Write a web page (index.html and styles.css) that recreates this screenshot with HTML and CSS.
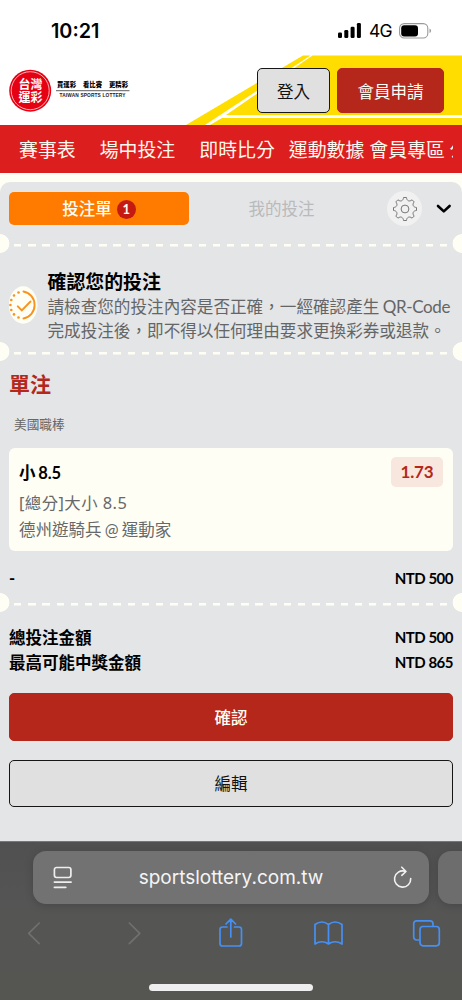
FILE: index.html
```
<!DOCTYPE html>
<html lang="zh-Hant">
<head>
<meta charset="utf-8">
<meta name="viewport" content="width=device-width">
<title>台灣運彩</title>
<link rel="stylesheet" href="styles.css">
</head>
<body>
<div class="phone">
  <div class="status">
    <span class="clock">10:21</span>
    <div class="status-right">
      <svg class="signal" width="24" height="16" viewBox="0 0 24 16"><rect x="0" y="9.5" width="4" height="5.5" rx="1.3"/><rect x="6.3" y="7" width="4" height="8" rx="1.3"/><rect x="12.6" y="3.7" width="4" height="11.3" rx="1.3"/><rect x="18.9" y="0" width="4" height="15" rx="1.3"/></svg>
      <span class="network">4G</span>
      <svg class="battery" width="33" height="16" viewBox="0 0 33 16"><rect x=".6" y=".6" width="28.2" height="14.4" rx="4.6" fill="none" stroke="#999" stroke-width="1.1"/><rect x="2.2" y="2.2" width="16.8" height="11.2" rx="3"/><path d="M30.5 5.5q1.6.7 1.6 2.3t-1.6 2.3z" fill="#999"/></svg>
    </div>
  </div>

  <header class="header">
    <svg class="stripes" width="462" height="70" viewBox="0 0 462 70" fill="#fd0"><path d="M303 .5h7.500L205 70H186z"/><path d="M312.500.5H462V60H226z"/><path d="M222 63H462v7H210z"/></svg>
    <svg class="logo" width="122" height="44" viewBox="0 0 122 44">
      <circle cx="21.200" cy="21.700" r="21" fill="#e50012"/><circle cx="21.200" cy="21.700" r="19" fill="none" stroke="#fff" stroke-width=".7"/>
      <g class="logo-mark"><text x="9.500" y="19.500" textLength="24" lengthAdjust="spacingAndGlyphs">台灣</text><text x="9.500" y="33" textLength="24" lengthAdjust="spacingAndGlyphs">運彩</text></g>
      <g class="logo-tag"><text x="48" y="18" textLength="19">買運彩</text><text x="74" y="18" textLength="19">看比賽</text><text x="100" y="18" textLength="19">更精彩</text></g>
      <path d="M47 21.700h73.500" stroke="#333" stroke-width=".8"/>
      <text class="logo-en" x="50.500" y="28.200" textLength="66">TAIWAN SPORTS LOTTERY</text>
    </svg>
    <div class="actions"><button class="btn login">登入</button><button class="btn apply">會員申請</button></div>
  </header>

  <nav class="nav"><a>賽事表</a><a>場中投注</a><a>即時比分</a><a class="near">運動數據</a><a class="tight">會員專區</a><a class="cut">公告</a></nav>

  <main class="slip">
    <div class="tabs">
      <div class="tab active">投注單<span class="count">1</span></div>
      <div class="tab idle">我的投注</div>
      <div class="gear"><svg width="26" height="26" viewBox="-13 -13 26 26" fill="none" stroke="#777" stroke-width="1"><circle r="3.900"/><path d="M-1.500 -11.500H1.500C1.720 -8.080 4.500 -6.940 7.070 -9.190L9.190 -7.070C6.940 -4.500 8.080 -1.720 11.500 -1.500V1.500C8.080 1.720 6.940 4.500 9.190 7.070L7.070 9.190C4.500 6.940 1.720 8.080 1.500 11.500H-1.500C-1.720 8.080 -4.500 6.940 -7.070 9.190L-9.190 7.070C-6.940 4.500 -8.080 1.720 -11.500 1.500V-1.500C-8.080 -1.720 -6.940 -4.500 -9.190 -7.070L-7.070 -9.190C-4.500 -6.940 -1.720 -8.080 -1.500 -11.500Z" stroke-linejoin="round"/></svg></div>
      <svg class="chevron" width="16" height="10" viewBox="0 0 16 10"><path d="M2 2l5.800 5.400L13.600 2" fill="none" stroke="#000" stroke-width="2.600" stroke-linecap="round" stroke-linejoin="round"/></svg>
    </div>
    <div class="tear"></div>
    <section class="notice">
      <svg class="check" width="29" height="38" viewBox="0 0 29 38"><ellipse cx="14.200" cy="19" rx="14.300" ry="18.800" fill="#fffef5"/><g fill="none" stroke="#f8931d" stroke-width="1.900" stroke-linecap="round"><path d="M14.500 5.500a13.400 13.700 0 0 1 0 27"/><path d="M8.800 20.300l4 4L21.500 15.500"/></g><g fill="#f8931d"><circle cx="9.500" cy="6.500" r="1.300"/><circle cx="5" cy="9.500" r="1.300"/><circle cx="2.300" cy="14" r="1.300"/><circle cx="1.400" cy="19" r="1.300"/><circle cx="2.300" cy="24" r="1.300"/><circle cx="5" cy="28.400" r="1.300"/><circle cx="9.500" cy="31.500" r="1.300"/></g></svg>
      <div class="notice-text">
        <h2>確認您的投注</h2>
        <p>請檢查您的投注內容是否正確，一經確認產生 <span class="qr">QR-Code</span></p>
        <p>完成投注後，即不得以任何理由要求更換彩券或退款。</p>
      </div>
    </section>
    <div class="tear"></div>
    <section class="bets">
      <h3>單注</h3>
      <div class="league">美國職棒</div>
      <article class="card">
        <div class="pick"><strong>小 8.5</strong><span class="market">[總分]大小 8.5</span><span class="match">德州遊騎兵 @ 運動家</span></div>
        <div class="odds">1.73</div>
      </article>
      <div class="row stake"><span>-</span><span class="money">NTD 500</span></div>
    </section>
    <div class="tear"></div>
    <section class="totals">
      <div class="row"><span>總投注金額</span><span class="money">NTD 500</span></div>
      <div class="row"><span>最高可能中獎金額</span><span class="money">NTD 865</span></div>
    </section>
    <div class="submit"><button class="btn confirm">確認</button><button class="btn edit">編輯</button></div>
  </main>

  <footer class="browser">
    <div class="address-row">
      <div class="address">
        <svg width="20" height="24" viewBox="0 0 20 24" fill="none" stroke="#eee" stroke-width="1.700" stroke-linecap="round"><rect x="1.400" y="1.500" width="16.500" height="10" rx="2.200"/><path d="M1.400 16.100h16.700M1.400 21.300h11.400"/></svg>
        <span class="url">sportslottery.com.tw</span>
        <svg width="20" height="24" viewBox="0 0 20 24" fill="none" stroke="#f2f2f2" stroke-width="1.600" stroke-linecap="round" stroke-linejoin="round"><path d="M18.700 12.500A8.100 8.100 0 1 1 13 5.300M9.800 1.200l4.200 4.300L9.800 9.300"/></svg>
      </div>
      <div class="next-tab"></div>
    </div>
    <div class="tools">
      <svg width="30" height="32" viewBox="0 0 30 32"><path d="M19.200 6L8.700 16.300L19.200 26.600"/></svg>
      <svg width="30" height="32" viewBox="0 0 30 32"><path d="M11.300 6l10.500 10.300L11.300 26.600"/></svg>
      <svg width="30" height="32" viewBox="0 0 30 32"><path d="M11 10H6.500Q4 10 4 12.500V26.500Q4 29 6.500 29H23Q25.500 29 25.500 26.500V12.500Q25.500 10 23 10H18.500M14.800 20V2.500M10 7l4.800-4.900L19.600 7"/></svg>
      <svg width="30" height="32" viewBox="0 0 30 32"><path d="M14.500 7.500Q8 2.500 1 7.500V27Q8 22.500 14.500 27Q21 22.500 28 27V7.500Q21 2.500 14.500 7.500V27"/></svg>
      <svg width="30" height="32" viewBox="0 0 30 32"><rect x="8" y="9.500" width="19.300" height="19.300" rx="3"/><path d="M7 23H4.700Q1.700 23 1.700 20V6.800Q1.700 3.800 4.700 3.800H18Q21 3.800 21 6.800V8.500"/></svg>
    </div>
    <div class="home"></div>
  </footer>
</div>
</body>
</html>
```
FILE: styles.css
```
* { box-sizing: border-box; }
body { margin: 0; background: #fffef5; }
h2, h3, p { margin: 0; }
svg { display: block; flex: none; }
.phone { width: 462px; height: 1000px; overflow: hidden; display: flex; flex-direction: column; background: #fffef5; color: #000; font-family: Lato, "Noto Sans CJK TC", sans-serif; font-size: 16.5px; white-space: nowrap; }
.phone > * { flex: none; }

.status { height: 55px; padding: 7px 30px 0 51px; display: flex; align-items: center; justify-content: space-between; background: #fff; }
.clock { font: 600 19.8px/24px Inter, sans-serif; letter-spacing: 0; }
.status-right { display: flex; align-items: center; }
.network { width: 22px; margin: 0 8px 0 7px; font: 400 17.5px/24px Inter, sans-serif; letter-spacing: -.8px; }

.header { position: relative; height: 70px; padding: 13px 18px 0 9px; display: flex; justify-content: space-between; background: #fff; }
.stripes { position: absolute; left: 0; top: 0; }
.logo { position: relative; margin-top: 1px; }
.logo-mark { fill: #fff; font: 700 12.500px "Noto Sans CJK TC", sans-serif; }
.logo-tag { font: 900 6.300px "Noto Sans CJK TC", sans-serif; }
.logo-en { fill: #222; font: 700 4.800px "Liberation Sans", sans-serif; }
.actions { position: relative; display: flex; gap: 7px; height: 45px; }
.btn { display: flex; align-items: center; justify-content: center; padding: 0; border: 1px solid #161616; border-radius: 5px; background: #e0e0e0; color: #111; font: inherit; }
.login { width: 73px; }
.apply { width: 107px; }
.apply, .confirm { border-color: #b5261b; background: #b5261b; color: #fffef5; }

.nav { height: 48px; width: 462px; padding: 1px 0 0 19px; border-right: 9px solid #dc1e1e; display: flex; align-items: center; gap: 24px; overflow: hidden; background: #dc1e1e; color: #fff9ef; font-size: 18.900px; line-height: 26px; }
.nav .near { margin-left: -10px; }
.nav .tight { margin-left: -19px; }
.nav .cut { margin-left: -19.500px; }

.slip { height: 659px; margin-top: 9px; padding-top: 10px; display: flex; flex-direction: column; background: #e4e5e7; border-radius: 10px 10px 0 0; }
.slip > * { flex: none; }
.tabs { height: 33px; padding: 0 10px 0 9px; display: flex; align-items: center; }
.tab { display: flex; align-items: center; justify-content: center; line-height: 24px; padding-top: 1px; }
.active { width: 180px; height: 33px; border-radius: 5px; background: #ff7b00; color: #fffef5; font-weight: 500; }
.count { width: 19px; height: 19px; margin-left: 5px; border-radius: 50%; background: #c51a12; font: 700 13px/19px Lato, sans-serif; text-align: center; }
.idle { width: 185px; color: #b8babb; }
.gear { width: 35px; height: 35px; margin-left: 13px; border-radius: 50%; background: #f1f1f1; display: flex; align-items: center; justify-content: center; }
.chevron { margin: 1px 0 0 14px; }

.tear { height: 19px; background: radial-gradient(circle at 0 50%, #fffef5 9px, transparent 9.700px), radial-gradient(circle at 100% 50%, #fffef5 9px, transparent 9.700px), repeating-linear-gradient(90deg, #fffef5 0 7.400px, transparent 7.400px 14.200px) 14px 9.500px / 434px 2.500px no-repeat; }
.tabs + .tear { margin-top: 9px; }

.notice { height: 89px; padding: 15px 0 0 9px; display: flex; }
.check { margin-top: 18px; }
.notice-text { margin-left: 9.500px; }
.notice h2 { font-size: 18.900px; line-height: 27px; font-weight: 700; }
.notice p { color: #646566; line-height: 23.700px; font-size: 16.600px; }
.qr { font-size: 17px; letter-spacing: -.35px; margin-left: -1px; }

.bets { height: 232px; padding: 10px 9px 0; }
.bets h3 { color: #b5261b; font-size: 21px; line-height: 26px; font-weight: 700; }
.league { margin: 17px 0 0 5px; height: 20px; line-height: 20px; color: #666; font-size: 12.700px; }
.card { height: 103px; margin-top: 14px; padding: 9px 10px 10px; display: flex; justify-content: space-between; border-radius: 6px; background: #fffef5; }
.pick { display: flex; flex-direction: column; color: #686868; line-height: 27px; padding-top: 3px; }
.pick strong { color: #000; line-height: 26px; margin-bottom: 3px; font-weight: 700; word-spacing: -1px; letter-spacing: -.1px; }
.market { font-family: "Noto Sans", "Noto Sans CJK TC", sans-serif; font-size: 16.400px; letter-spacing: .45px; }
.match { margin-top: 1px; word-spacing: -1px; }
.odds { width: 52px; height: 30px; border-radius: 5px; background: #f8e7df; color: #b5261b; font-weight: 700; font-size: 17px; letter-spacing: -.2px; line-height: 30px; text-align: center; }
.row { display: flex; justify-content: space-between; align-items: center; height: 25px; font-weight: 700; }
.stake { margin-top: 14px; }
.money { font-size: 15px; letter-spacing: -.5px; }

.totals { padding: 12px 9px 0; }
.submit { padding: 19px 9px 0 9px; display: flex; flex-direction: column; gap: 19px; }
.confirm, .edit { height: 47.500px; width: 100%; }
.confirm { font-weight: 500; }

.browser { height: 159px; padding-top: 9px; border-top: 1px solid #777; background: linear-gradient(#505050, #555 40%, #555552); }
.address-row { display: flex; gap: 9px; padding-left: 33px; }
.address { width: 396px; height: 53px; flex: none; padding: 0 17px 0 20px; border-radius: 13px; display: flex; align-items: center; justify-content: space-between; background: #727272; color: #f5f5f5; font: 400 19px Inter, sans-serif; box-shadow: 0 2px 9px rgba(0,0,0,.17); }
.url { margin-right: 3px; }
.next-tab { width: 50px; height: 53px; flex: none; border-radius: 13px; background: #6d6d6d; box-shadow: 0 2px 9px rgba(0,0,0,.17); }
.tools { height: 32px; margin-top: 13px; padding: 0 20px 0 20px; display: flex; justify-content: space-between; }
.tools svg { fill: none; stroke: #4690f3; stroke-width: 1.700; stroke-linecap: round; stroke-linejoin: round; }
.tools svg:nth-child(-n+2) { stroke: #707070; }
.home { width: 164px; height: 6.500px; margin: 35px 0 0 149px; border-radius: 4px; background: #eee; }
```
